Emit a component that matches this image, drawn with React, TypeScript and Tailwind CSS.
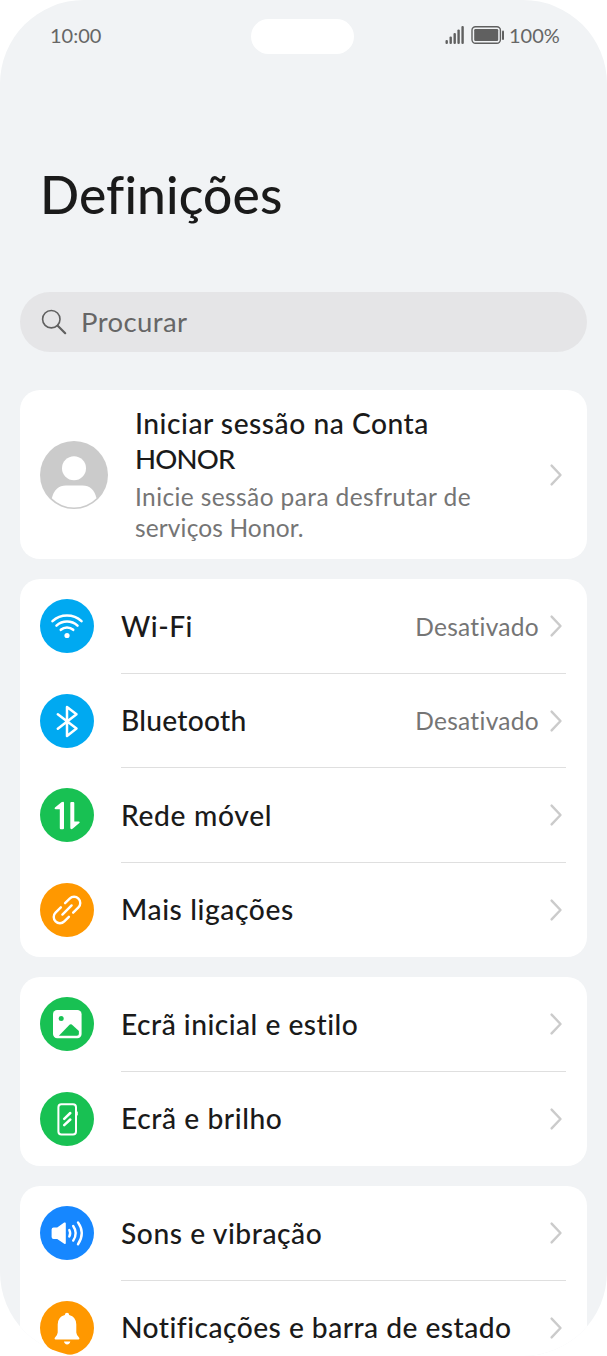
import type { ReactNode } from 'react'

interface Item {
  label: string
  tracking: string
  value?: string
  color: string
  icon: ReactNode
}

const WifiIcon = (
  <>
    <path d="M12.5 22.1a21.5 21.5 0 0 1 29 0M16.5 26.6a15.5 15.5 0 0 1 21 0M20.8 30.8a9.3 9.3 0 0 1 12.4 0" fill="none" stroke="#fff" strokeWidth="2.6" strokeLinecap="round" />
    <circle cx="27" cy="36.5" r="2.6" fill="#fff" />
  </>
)

const BluetoothIcon = (
  <path d="M17.8 20.3L36.5 34.6L27 42V13L36.5 20.2L17.8 34.7" fill="none" stroke="#fff" strokeWidth="2.5" strokeLinejoin="round" strokeLinecap="round" />
)

const DataIcon = (
  <>
    <path d="M24 14.9V40.2Q24 41.2 23 41.2H20.8Q19.8 41.2 19.8 40.2V21.2H15.5Q13.7 21 15 19.6L21.4 14.2Q24 12.8 24 14.9Z" fill="#fff" />
    <path d="M30.3 39.7V15Q30.3 14 31.3 14H33.2Q34.3 14 34.3 15V33.5H38.8Q40.6 33.7 39.3 35.1L32.9 40.6Q30.3 42 30.3 39.7Z" fill="#fff" />
  </>
)

const LinkIcon = (
  <g transform="rotate(-45 27 27)" fill="none" stroke="#fff" strokeWidth="2.4" strokeLinecap="round">
    <path d="M23.5 33.2H17A6.2 6.2 0 0 1 17 20.8H24.5" />
    <path d="M30.5 20.8H37A6.2 6.2 0 0 1 37 33.2H29.5" />
    <path d="M20.5 27H33.5" />
  </g>
)

const PictureIcon = (
  <>
    <rect x="13" y="13" width="28.6" height="28.3" rx="4.2" fill="#fff" />
    <circle cx="21.2" cy="21.4" r="2.5" fill="#18c153" />
    <path d="M18.9 38.8L29.8 27.6Q30.8 26.7 31.8 27.6L38.9 34V36.8Q38.9 38.8 36.9 38.8Z" fill="#18c153" />
  </>
)

const PhoneIcon = (
  <g fill="none" stroke="#fff" strokeLinecap="round">
    <rect x="18.4" y="12.2" width="17.6" height="30.2" rx="3" strokeWidth="2" />
    <path d="M37.3 20V23" strokeWidth="1" />
    <path d="M24.2 26.8L30.3 21M24.2 33.2L30.3 27.5" strokeWidth="2.5" />
  </g>
)

const SoundIcon = (
  <>
    <path d="M13.6 21.4H17.2L24.2 16.6Q25.8 15.9 25.8 17.5V37Q25.8 38.6 24.2 37.8L17.2 33.1H13.6Q11.6 33.1 11.6 31.1V23.4Q11.6 21.4 13.6 21.4Z" fill="#fff" />
    <path d="M29.3 24Q31.1 27.3 29.3 30.5M33.2 20Q38.2 27.2 33.2 34.6M38 16.4Q45.6 27.2 38 38.2" fill="none" stroke="#fff" strokeWidth="2.4" strokeLinecap="round" />
  </>
)

const BellIcon = (
  <>
    <path d="M27 11.8Q29 11.8 29.2 14Q36.2 15.8 36.3 23.5V31.5Q36.4 33.7 38.8 36.2Q40.2 38 38.4 38.4H15.6Q13.8 38 15.2 36.2Q17.6 33.7 17.7 31.5V23.5Q17.8 15.8 24.8 14Q25 11.8 27 11.8Z" fill="#fff" />
    <path d="M24 40.6H30.3Q29.8 43.4 27.1 43.4Q24.5 43.4 24 40.6Z" fill="#fff" />
  </>
)

const groups: Item[][] = [
  [
    { label: 'Wi-Fi', tracking: 'tracking-[0.55px]', value: 'Desativado', color: 'bg-[#00a9f1]', icon: WifiIcon },
    { label: 'Bluetooth', tracking: 'tracking-[0.25px]', value: 'Desativado', color: 'bg-[#00a9f1]', icon: BluetoothIcon },
    { label: 'Rede móvel', tracking: 'tracking-[0.67px]', color: 'bg-[#18c153]', icon: DataIcon },
    { label: 'Mais ligações', tracking: 'tracking-[0.6px]', color: 'bg-[#ff9800]', icon: LinkIcon },
  ],
  [
    { label: 'Ecrã inicial e estilo', tracking: 'tracking-[0.48px]', color: 'bg-[#18c153]', icon: PictureIcon },
    { label: 'Ecrã e brilho', tracking: 'tracking-[0.57px]', color: 'bg-[#18c153]', icon: PhoneIcon },
  ],
  [
    { label: 'Sons e vibração', tracking: 'tracking-[0.56px]', color: 'bg-[#1687ff]', icon: SoundIcon },
    { label: 'Notificações e barra de estado', tracking: 'tracking-[0.46px]', color: 'bg-[#ff9800]', icon: BellIcon },
  ],
]

function Chevron() {
  return (
    <svg className="w-[14px] h-6 shrink-0" viewBox="0 0 14 24" fill="none">
      <path d="M2.6 2.6L11.5 12L2.6 21.4" stroke="#cbcbcb" strokeWidth="2.4" strokeLinecap="round" strokeLinejoin="round" />
    </svg>
  )
}

function Row({ item, last }: { item: Item; last: boolean }) {
  return (
    <div className="h-[94.5px] flex items-center pl-5">
      <div className={`w-[54px] h-[54px] rounded-full shrink-0 ${item.color}`}>
        <svg className="w-full h-full" viewBox="0 0 54 54">{item.icon}</svg>
      </div>
      <div className={`ml-[27px] mr-[21px] h-full flex-1 flex items-center border-b ${last ? 'border-transparent' : 'border-[#dfdfdf]'}`}>
        <span className={`text-[28.2px] font-medium whitespace-nowrap ${item.tracking}`}>{item.label}</span>
        <span className="flex-1" />
        {item.value && <span className="mr-[10px] pt-[3px] text-[24.5px] tracking-[0.3px] text-[#757575]">{item.value}</span>}
        <span className="mr-[3px] pt-px flex"><Chevron /></span>
      </div>
    </div>
  )
}

export default function App() {
  return (
    <div className="w-[607px] h-[1356px] bg-white">
      <div className="w-full h-full rounded-[84px] bg-[#f1f3f5] overflow-hidden font-[Lato,sans-serif] text-[#1a1a1a]">
        {/* Status bar */}
        <div className="h-[72px] pt-[19px] grid grid-cols-[251px_103px_1fr]">
          <div className="pl-[50px] h-[31px] flex items-center text-[20px] text-[#666]">10:00</div>
          <div className="h-[35px] rounded-full bg-white" />
          <div className="pl-[91px] h-[31px] flex items-center text-[20px] text-[#666]">
            <svg className="w-[60px] h-5 mr-1" viewBox="0 0 60 20" fill="#606060">
              <rect x="0.5" y="15" width="2.4" height="4" rx="1.1" />
              <rect x="4.5" y="11.5" width="2.4" height="7.5" rx="1.1" />
              <rect x="8.5" y="8" width="2.4" height="11" rx="1.1" />
              <rect x="12.4" y="4.5" width="2.4" height="14.5" rx="1.1" />
              <rect x="16.4" y="1" width="2.4" height="18" rx="1.1" />
              <rect x="27" y="1.8" width="28.4" height="16.5" rx="3.5" fill="none" stroke="#606060" strokeWidth="1.4" />
              <rect x="29.2" y="4" width="24" height="12" rx="1.2" />
              <rect x="57" y="5.5" width="2" height="9.5" rx="1" />
            </svg>
            <span>100%</span>
          </div>
        </div>

        <h1 className="mt-[90px] ml-[40px] h-[64px] leading-[64px] text-[51.5px] font-medium tracking-[0.15px]">Definições</h1>

        <div className="mt-[66px] mx-5 h-[60px] rounded-full bg-[#e5e5e7] flex items-center text-[27.5px] text-[#666]">
          <svg className="ml-[21px] mr-[14px] w-[26px] h-[26px]" viewBox="0 0 26 26" fill="none" stroke="#606060" strokeLinecap="round">
            <circle cx="10.3" cy="10.2" r="8.7" strokeWidth="1.6" />
            <path d="M16.7 16.7L24.2 24.2" strokeWidth="2.2" />
          </svg>
          <span className="tracking-[0.4px]">Procurar</span>
        </div>

        <div className="mt-[38px] mx-5 h-[169px] rounded-[20px] bg-white flex items-center pl-5 pr-6">
          <svg className="w-[68px] h-[68px] shrink-0" viewBox="0 0 68 68">
            <circle cx="34" cy="34" r="34" fill="#cbcbcb" />
            <circle cx="34" cy="27.3" r="12" fill="#fff" />
            <path d="M11.8 57.3Q15 44.5 26 44.5H42.5Q53.5 44.5 56.5 57.3Q47 66.5 34 66.5Q21 66.5 11.8 57.3Z" fill="#fff" />
          </svg>
          <div className="ml-[27px] flex-1 whitespace-nowrap">
            <div className="text-[28.2px] leading-[35px] font-medium">
              <span className="tracking-[0.52px]">Iniciar sessão na Conta</span><br /><span className="text-[27.5px] tracking-[-0.8px]">HONOR</span>
            </div>
            <div className="mt-[5px] text-[24.5px] leading-[31px] text-[#757575]">
              <span className="tracking-[0.39px]">Inicie sessão para desfrutar de</span><br /><span className="tracking-[0.13px]">serviços Honor.</span>
            </div>
          </div>
          <Chevron />
        </div>

        {groups.map((items, g) => (
          <div key={g} className="mt-5 mx-5 rounded-[20px] bg-white">
            {items.map((item, i) => (
              <Row key={item.label} item={item} last={i === items.length - 1} />
            ))}
          </div>
        ))}
      </div>
    </div>
  )
}
